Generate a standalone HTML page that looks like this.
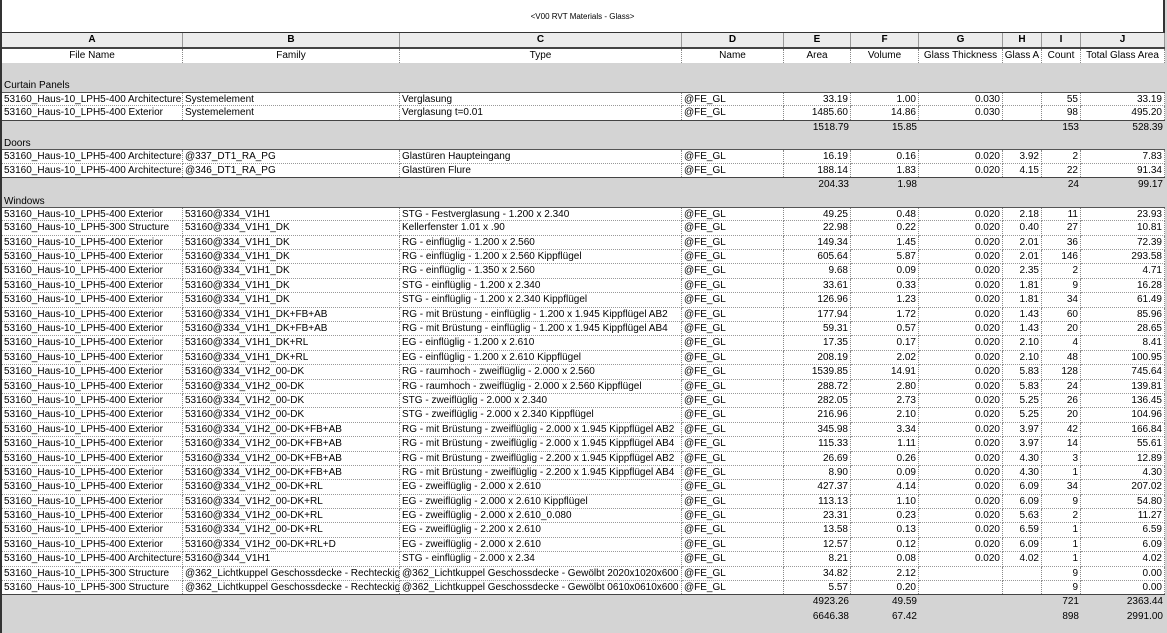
<!DOCTYPE html>
<html><head><meta charset="utf-8">
<style>
*{margin:0;padding:0;box-sizing:border-box}
body{width:1167px;height:633px;overflow:hidden;background:#d4d4d4;font-family:"Liberation Sans",Arial,sans-serif;font-size:10px;color:#000;position:relative}
#frame{position:absolute;left:0;top:0;width:1167px;height:633px;border-left:2px solid #333;}
#title{position:absolute;left:2px;top:0;width:1163px;height:33px;background:#fff;border-right:2px solid #333;border-bottom:1px solid #333;text-align:center;font-size:8px;line-height:33px}
.r{display:grid;grid-template-columns:181px 217px 282px 102px 67px 68px 84px 39px 39px 84px;height:14.4px;line-height:14px;white-space:nowrap}
#rows{position:absolute;left:2px;top:33px;width:1163px}
.hd{height:15.6px;background:#ececec;font-weight:bold;text-align:center;border-bottom:2px solid #444}
.hd div{border-right:1px solid #999}
.fn{background:#fff;text-align:center;height:14.4px}
.fn div{border-right:1px dotted #888}
.d{background:#fff}
.d div{border-right:1px dotted #888;border-bottom:1px dotted #999;padding:0 2px;overflow:hidden}
.d div:nth-child(n+5){text-align:right}
.d div:nth-child(1){text-align:left}
.t div{padding:0 2px;text-align:right}
.f{border-top:1px solid #555}
.l{border-bottom:1px solid #444}
.l div{border-bottom:none}
.g{height:14.4px;line-height:17px;padding-left:2px}
.sp{height:14.4px}
</style></head><body>
<div id="frame"></div>
<div id="title">&lt;V00 RVT Materials - Glass&gt;</div>
<div id="rows">
<div class="r hd"><div>A</div><div>B</div><div>C</div><div>D</div><div>E</div><div>F</div><div>G</div><div>H</div><div>I</div><div>J</div></div>
<div class="r fn"><div>File Name</div><div>Family</div><div>Type</div><div>Name</div><div>Area</div><div>Volume</div><div>Glass Thickness</div><div>Glass A</div><div>Count</div><div>Total Glass Area</div></div>
<div class="sp"></div>
<div class="g">Curtain Panels</div>
<div class="r d f"><div>53160_Haus-10_LPH5-400 Architecture</div><div>Systemelement</div><div>Verglasung</div><div>@FE_GL</div><div>33.19</div><div>1.00</div><div>0.030</div><div></div><div>55</div><div>33.19</div></div>
<div class="r d l"><div>53160_Haus-10_LPH5-400 Exterior</div><div>Systemelement</div><div>Verglasung t=0.01</div><div>@FE_GL</div><div>1485.60</div><div>14.86</div><div>0.030</div><div></div><div>98</div><div>495.20</div></div>
<div class="r t"><div></div><div></div><div></div><div></div><div>1518.79</div><div>15.85</div><div></div><div></div><div>153</div><div>528.39</div></div>
<div class="g">Doors</div>
<div class="r d f"><div>53160_Haus-10_LPH5-400 Architecture</div><div>@337_DT1_RA_PG</div><div>Glastüren Haupteingang</div><div>@FE_GL</div><div>16.19</div><div>0.16</div><div>0.020</div><div>3.92</div><div>2</div><div>7.83</div></div>
<div class="r d l"><div>53160_Haus-10_LPH5-400 Architecture</div><div>@346_DT1_RA_PG</div><div>Glastüren Flure</div><div>@FE_GL</div><div>188.14</div><div>1.83</div><div>0.020</div><div>4.15</div><div>22</div><div>91.34</div></div>
<div class="r t"><div></div><div></div><div></div><div></div><div>204.33</div><div>1.98</div><div></div><div></div><div>24</div><div>99.17</div></div>
<div class="g">Windows</div>
<div class="r d f"><div>53160_Haus-10_LPH5-400 Exterior</div><div>53160@334_V1H1</div><div>STG - Festverglasung - 1.200 x 2.340</div><div>@FE_GL</div><div>49.25</div><div>0.48</div><div>0.020</div><div>2.18</div><div>11</div><div>23.93</div></div>
<div class="r d"><div>53160_Haus-10_LPH5-300 Structure</div><div>53160@334_V1H1_DK</div><div>Kellerfenster 1.01 x .90</div><div>@FE_GL</div><div>22.98</div><div>0.22</div><div>0.020</div><div>0.40</div><div>27</div><div>10.81</div></div>
<div class="r d"><div>53160_Haus-10_LPH5-400 Exterior</div><div>53160@334_V1H1_DK</div><div>RG - einflüglig - 1.200 x 2.560</div><div>@FE_GL</div><div>149.34</div><div>1.45</div><div>0.020</div><div>2.01</div><div>36</div><div>72.39</div></div>
<div class="r d"><div>53160_Haus-10_LPH5-400 Exterior</div><div>53160@334_V1H1_DK</div><div>RG - einflüglig - 1.200 x 2.560 Kippflügel</div><div>@FE_GL</div><div>605.64</div><div>5.87</div><div>0.020</div><div>2.01</div><div>146</div><div>293.58</div></div>
<div class="r d"><div>53160_Haus-10_LPH5-400 Exterior</div><div>53160@334_V1H1_DK</div><div>RG - einflüglig - 1.350 x 2.560</div><div>@FE_GL</div><div>9.68</div><div>0.09</div><div>0.020</div><div>2.35</div><div>2</div><div>4.71</div></div>
<div class="r d"><div>53160_Haus-10_LPH5-400 Exterior</div><div>53160@334_V1H1_DK</div><div>STG - einflüglig - 1.200 x 2.340</div><div>@FE_GL</div><div>33.61</div><div>0.33</div><div>0.020</div><div>1.81</div><div>9</div><div>16.28</div></div>
<div class="r d"><div>53160_Haus-10_LPH5-400 Exterior</div><div>53160@334_V1H1_DK</div><div>STG - einflüglig - 1.200 x 2.340 Kippflügel</div><div>@FE_GL</div><div>126.96</div><div>1.23</div><div>0.020</div><div>1.81</div><div>34</div><div>61.49</div></div>
<div class="r d"><div>53160_Haus-10_LPH5-400 Exterior</div><div>53160@334_V1H1_DK+FB+AB</div><div>RG - mit Brüstung - einflüglig - 1.200 x 1.945 Kippflügel AB2</div><div>@FE_GL</div><div>177.94</div><div>1.72</div><div>0.020</div><div>1.43</div><div>60</div><div>85.96</div></div>
<div class="r d"><div>53160_Haus-10_LPH5-400 Exterior</div><div>53160@334_V1H1_DK+FB+AB</div><div>RG - mit Brüstung - einflüglig - 1.200 x 1.945 Kippflügel AB4</div><div>@FE_GL</div><div>59.31</div><div>0.57</div><div>0.020</div><div>1.43</div><div>20</div><div>28.65</div></div>
<div class="r d"><div>53160_Haus-10_LPH5-400 Exterior</div><div>53160@334_V1H1_DK+RL</div><div>EG - einflüglig - 1.200 x 2.610</div><div>@FE_GL</div><div>17.35</div><div>0.17</div><div>0.020</div><div>2.10</div><div>4</div><div>8.41</div></div>
<div class="r d"><div>53160_Haus-10_LPH5-400 Exterior</div><div>53160@334_V1H1_DK+RL</div><div>EG - einflüglig - 1.200 x 2.610 Kippflügel</div><div>@FE_GL</div><div>208.19</div><div>2.02</div><div>0.020</div><div>2.10</div><div>48</div><div>100.95</div></div>
<div class="r d"><div>53160_Haus-10_LPH5-400 Exterior</div><div>53160@334_V1H2_00-DK</div><div>RG - raumhoch - zweiflüglig - 2.000 x 2.560</div><div>@FE_GL</div><div>1539.85</div><div>14.91</div><div>0.020</div><div>5.83</div><div>128</div><div>745.64</div></div>
<div class="r d"><div>53160_Haus-10_LPH5-400 Exterior</div><div>53160@334_V1H2_00-DK</div><div>RG - raumhoch - zweiflüglig - 2.000 x 2.560 Kippflügel</div><div>@FE_GL</div><div>288.72</div><div>2.80</div><div>0.020</div><div>5.83</div><div>24</div><div>139.81</div></div>
<div class="r d"><div>53160_Haus-10_LPH5-400 Exterior</div><div>53160@334_V1H2_00-DK</div><div>STG - zweiflüglig - 2.000 x 2.340</div><div>@FE_GL</div><div>282.05</div><div>2.73</div><div>0.020</div><div>5.25</div><div>26</div><div>136.45</div></div>
<div class="r d"><div>53160_Haus-10_LPH5-400 Exterior</div><div>53160@334_V1H2_00-DK</div><div>STG - zweiflüglig - 2.000 x 2.340 Kippflügel</div><div>@FE_GL</div><div>216.96</div><div>2.10</div><div>0.020</div><div>5.25</div><div>20</div><div>104.96</div></div>
<div class="r d"><div>53160_Haus-10_LPH5-400 Exterior</div><div>53160@334_V1H2_00-DK+FB+AB</div><div>RG - mit Brüstung - zweiflüglig - 2.000 x 1.945 Kippflügel AB2</div><div>@FE_GL</div><div>345.98</div><div>3.34</div><div>0.020</div><div>3.97</div><div>42</div><div>166.84</div></div>
<div class="r d"><div>53160_Haus-10_LPH5-400 Exterior</div><div>53160@334_V1H2_00-DK+FB+AB</div><div>RG - mit Brüstung - zweiflüglig - 2.000 x 1.945 Kippflügel AB4</div><div>@FE_GL</div><div>115.33</div><div>1.11</div><div>0.020</div><div>3.97</div><div>14</div><div>55.61</div></div>
<div class="r d"><div>53160_Haus-10_LPH5-400 Exterior</div><div>53160@334_V1H2_00-DK+FB+AB</div><div>RG - mit Brüstung - zweiflüglig - 2.200 x 1.945 Kippflügel AB2</div><div>@FE_GL</div><div>26.69</div><div>0.26</div><div>0.020</div><div>4.30</div><div>3</div><div>12.89</div></div>
<div class="r d"><div>53160_Haus-10_LPH5-400 Exterior</div><div>53160@334_V1H2_00-DK+FB+AB</div><div>RG - mit Brüstung - zweiflüglig - 2.200 x 1.945 Kippflügel AB4</div><div>@FE_GL</div><div>8.90</div><div>0.09</div><div>0.020</div><div>4.30</div><div>1</div><div>4.30</div></div>
<div class="r d"><div>53160_Haus-10_LPH5-400 Exterior</div><div>53160@334_V1H2_00-DK+RL</div><div>EG - zweiflüglig - 2.000 x 2.610</div><div>@FE_GL</div><div>427.37</div><div>4.14</div><div>0.020</div><div>6.09</div><div>34</div><div>207.02</div></div>
<div class="r d"><div>53160_Haus-10_LPH5-400 Exterior</div><div>53160@334_V1H2_00-DK+RL</div><div>EG - zweiflüglig - 2.000 x 2.610 Kippflügel</div><div>@FE_GL</div><div>113.13</div><div>1.10</div><div>0.020</div><div>6.09</div><div>9</div><div>54.80</div></div>
<div class="r d"><div>53160_Haus-10_LPH5-400 Exterior</div><div>53160@334_V1H2_00-DK+RL</div><div>EG - zweiflüglig - 2.000 x 2.610_0.080</div><div>@FE_GL</div><div>23.31</div><div>0.23</div><div>0.020</div><div>5.63</div><div>2</div><div>11.27</div></div>
<div class="r d"><div>53160_Haus-10_LPH5-400 Exterior</div><div>53160@334_V1H2_00-DK+RL</div><div>EG - zweiflüglig - 2.200 x 2.610</div><div>@FE_GL</div><div>13.58</div><div>0.13</div><div>0.020</div><div>6.59</div><div>1</div><div>6.59</div></div>
<div class="r d"><div>53160_Haus-10_LPH5-400 Exterior</div><div>53160@334_V1H2_00-DK+RL+D</div><div>EG - zweiflüglig - 2.000 x 2.610</div><div>@FE_GL</div><div>12.57</div><div>0.12</div><div>0.020</div><div>6.09</div><div>1</div><div>6.09</div></div>
<div class="r d"><div>53160_Haus-10_LPH5-400 Architecture</div><div>53160@344_V1H1</div><div>STG - einflüglig - 2.000 x 2.34</div><div>@FE_GL</div><div>8.21</div><div>0.08</div><div>0.020</div><div>4.02</div><div>1</div><div>4.02</div></div>
<div class="r d"><div>53160_Haus-10_LPH5-300 Structure</div><div>@362_Lichtkuppel Geschossdecke - Rechteckig</div><div>@362_Lichtkuppel Geschossdecke - Gewölbt 2020x1020x600</div><div>@FE_GL</div><div>34.82</div><div>2.12</div><div></div><div></div><div>9</div><div>0.00</div></div>
<div class="r d l"><div>53160_Haus-10_LPH5-300 Structure</div><div>@362_Lichtkuppel Geschossdecke - Rechteckig</div><div>@362_Lichtkuppel Geschossdecke - Gewölbt 0610x0610x600</div><div>@FE_GL</div><div>5.57</div><div>0.20</div><div></div><div></div><div>9</div><div>0.00</div></div>
<div class="r t"><div></div><div></div><div></div><div></div><div>4923.26</div><div>49.59</div><div></div><div></div><div>721</div><div>2363.44</div></div>
<div class="r t"><div></div><div></div><div></div><div></div><div>6646.38</div><div>67.42</div><div></div><div></div><div>898</div><div>2991.00</div></div>
</div>
</body></html>
